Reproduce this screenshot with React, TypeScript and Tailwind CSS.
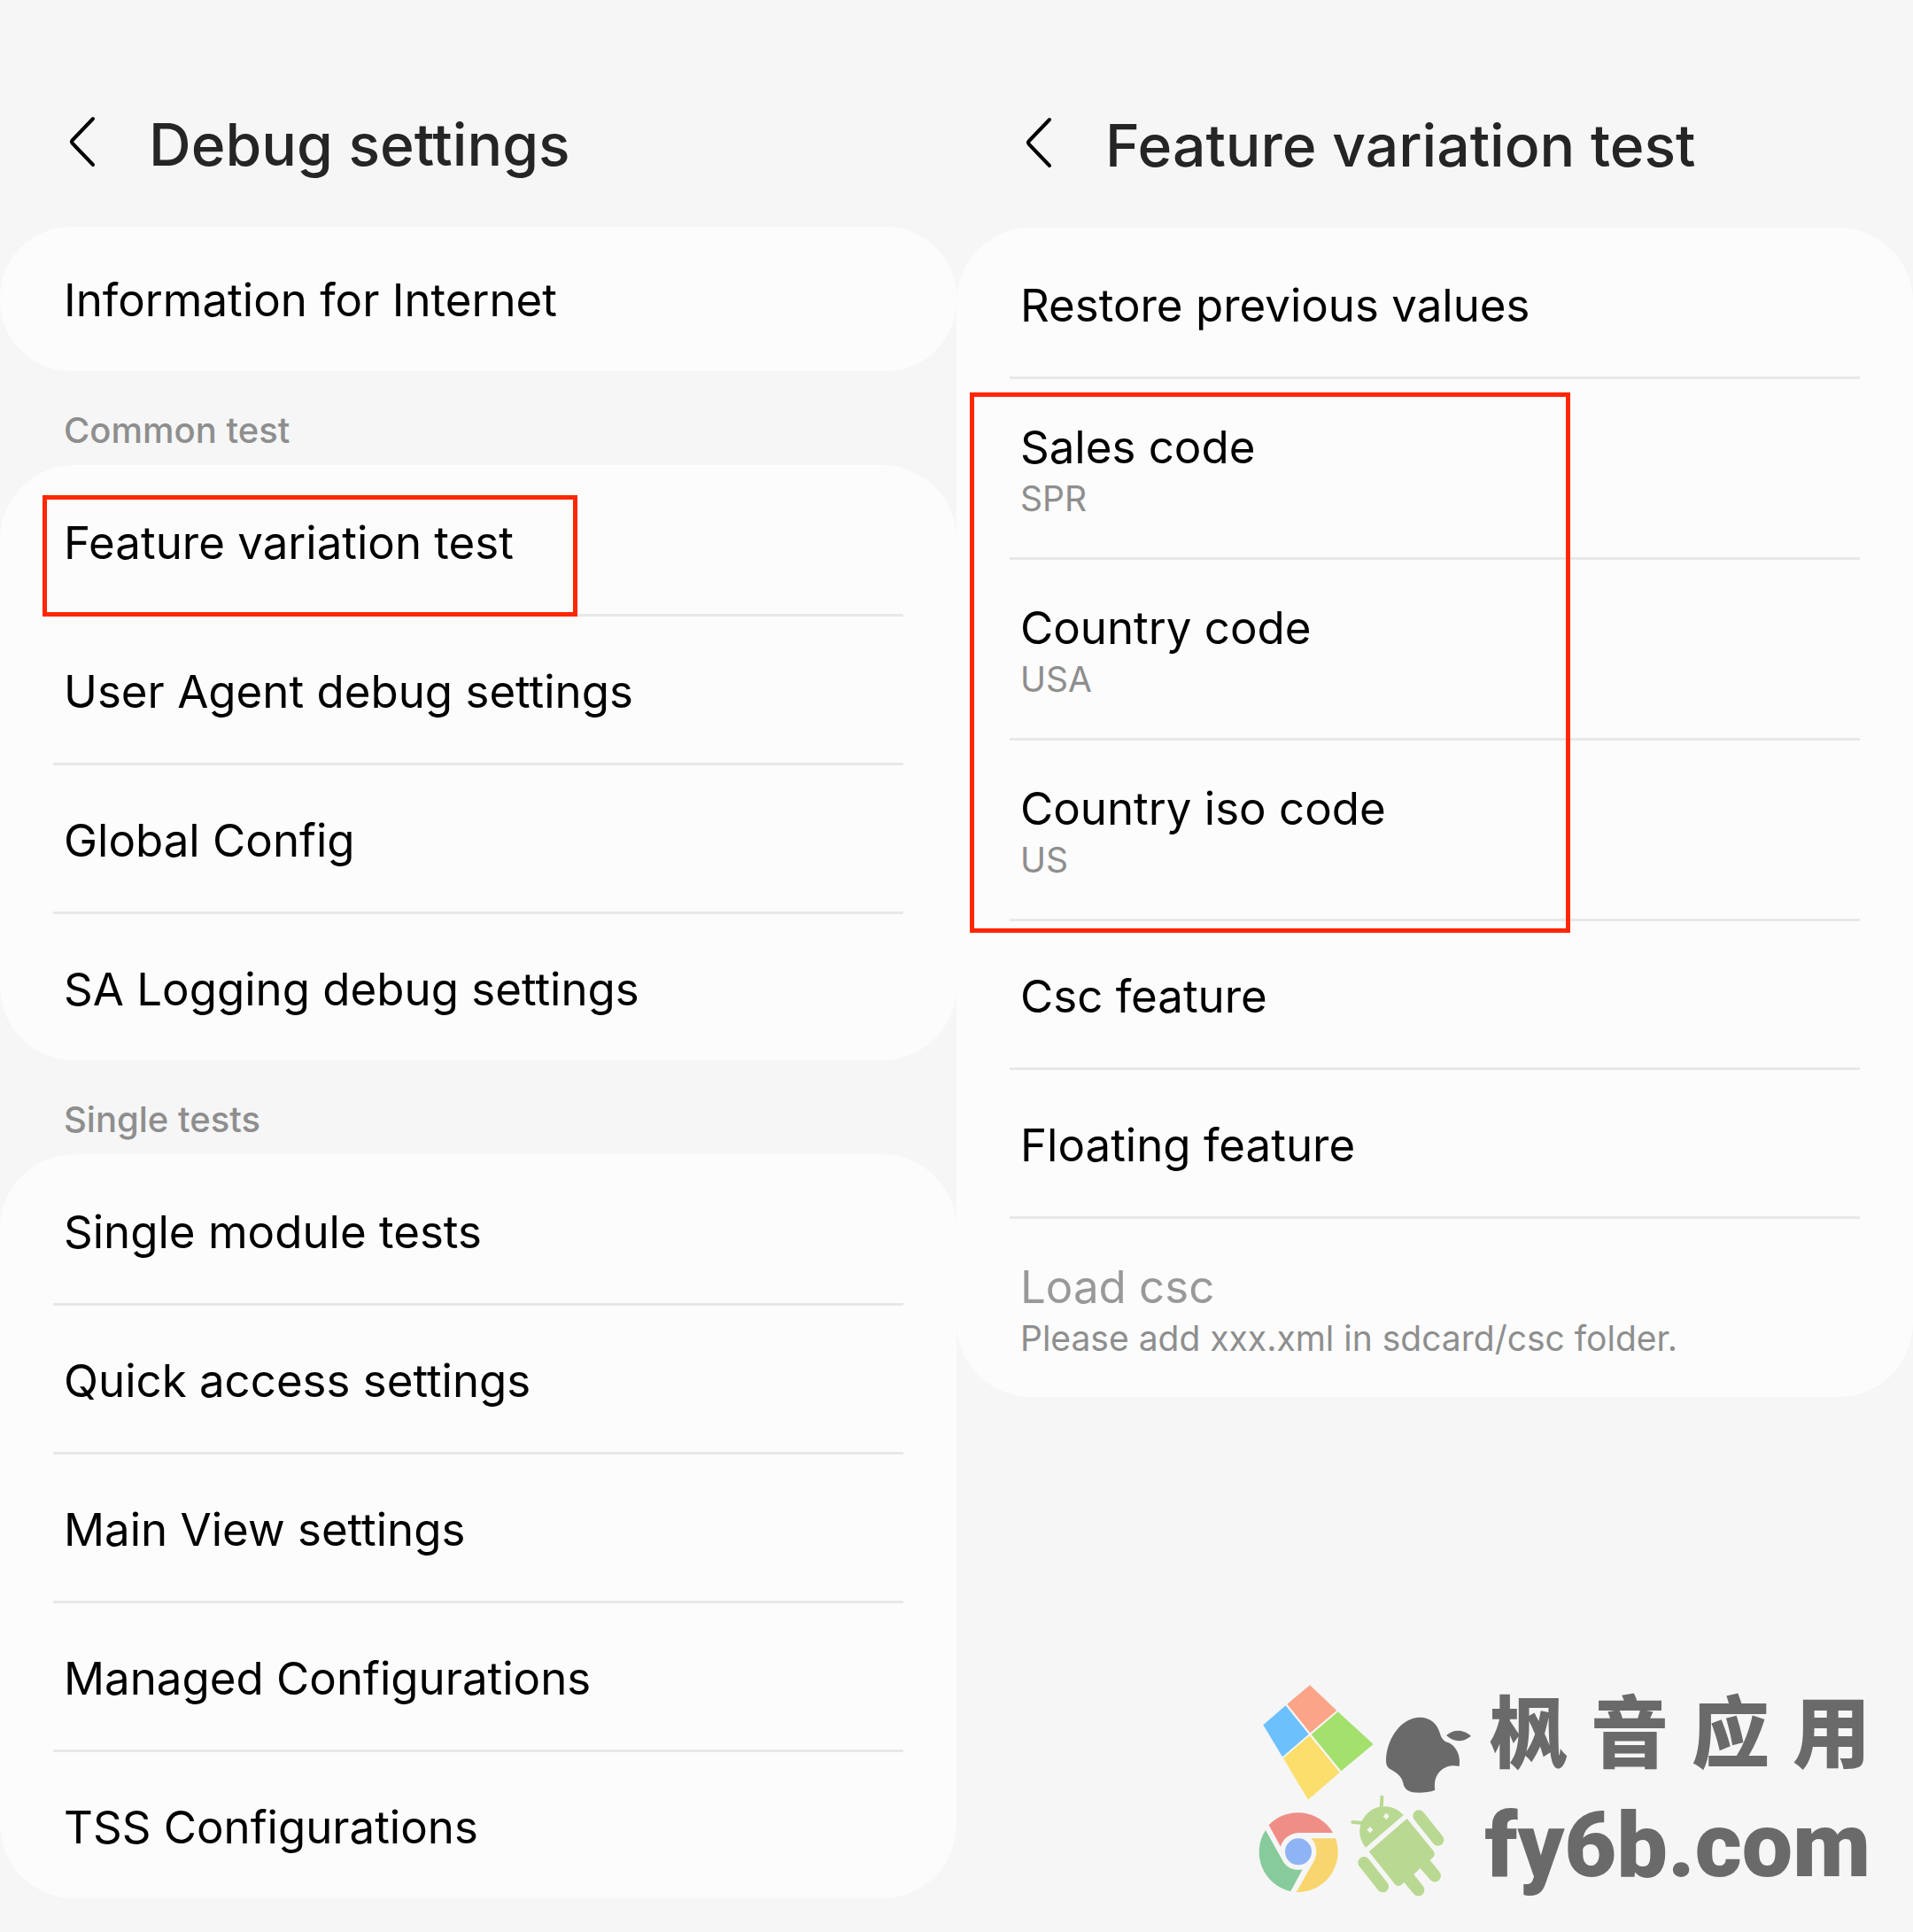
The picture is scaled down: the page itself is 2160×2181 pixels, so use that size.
type Item = { label: string; value?: string; disabled?: boolean };

const commonTests: Item[] = [
  { label: "Feature variation test" },
  { label: "User Agent debug settings" },
  { label: "Global Config" },
  { label: "SA Logging debug settings" },
];

const singleTests: Item[] = [
  { label: "Single module tests" },
  { label: "Quick access settings" },
  { label: "Main View settings" },
  { label: "Managed Configurations" },
  { label: "TSS Configurations" },
];

const featureItems: Item[] = [
  { label: "Restore previous values" },
  { label: "Sales code", value: "SPR" },
  { label: "Country code", value: "USA" },
  { label: "Country iso code", value: "US" },
  { label: "Csc feature" },
  { label: "Floating feature" },
  { label: "Load csc", value: "Please add xxx.xml in sdcard/csc folder.", disabled: true },
];

function Header({ title }: { title: string }) {
  return (
    <header className="flex h-64 items-end pb-14 pl-[72px]">
      <button type="button" aria-label="Back" className="mb-2 h-16 w-10">
        <svg viewBox="0 0 40 64" className="h-16 w-10" fill="none" stroke="#000" strokeWidth="4" strokeLinecap="round" strokeLinejoin="round">
          <path d="M33 6 L10 30 Q8 32 10 34 L33 58" />
        </svg>
      </button>
      <h1 className="ml-14 text-[66px] leading-[74px] font-medium text-[#252525]">{title}</h1>
    </header>
  );
}

function Rows({ items }: { items: Item[] }) {
  return (
    <ul>
      {items.map((item, i) => (
        <li key={item.label} className="px-[60px]">
          <button
            type="button"
            disabled={item.disabled}
            className={
              "flex w-full flex-col items-start justify-center border-t-3 px-3 text-left " +
              (i === 0 ? "border-transparent " : "border-[#e8e8e8] ") +
              (item.value ? "h-[204px] pt-2" : "h-[168px] pt-1")
            }
          >
            <span className={"text-[51px] leading-[60px] " + (item.disabled ? "text-[#999999]" : "text-black")}>{item.label}</span>
            {item.value && <span className="text-[39px] leading-[56px] text-[#8e8e8e]">{item.value}</span>}
          </button>
        </li>
      ))}
    </ul>
  );
}

function SectionTitle({ children }: { children: string }) {
  return <h2 className="flex h-[106px] items-end px-[72px] pb-3 text-[40px] leading-[54px] font-medium text-[#8e8e8e]">{children}</h2>;
}

function Logos() {
  return (
    <svg viewBox="66 66 720 720" className="size-60 shrink-0" aria-hidden="true">
      <path fill="#fca488" d="M240 67 331 153 241 229 163 131Z" />
      <path fill="#a4e06c" d="M335 157 455 267 346 358 245 234Z" />
      <path fill="#6cc0fc" d="M158 136 236 233 147 310 82 202Z" />
      <path fill="#fbde6c" d="M239 238 341 362 234 455 150 314Z" />
      <g fill="#6a6a6a">
        <path d="M612 176C650 176 672 200 680 228C686 250 694 257 710 262C735 274 752 305 746 342C700 330 655 362 664 422C640 432 610 432 588 430C566 424 558 412 556 398C550 372 528 360 510 350C500 342 498 335 498 318C502 240 555 176 612 176Z" />
        <path d="M702 237Q743 205 786 239Q743 273 702 237Z" />
      </g>
      <path fill="#ef8e87" d="M101 541A136 136 0 0 1 318 567H201C170 569 147 590 141 614Z" />
      <path fill="#88cb9b" d="M90 558 147 660C160 685 185 697 215 691L175 765A136 136 0 0 1 90 558Z" />
      <path fill="#f9d56f" d="M245 586H327A136 136 0 0 1 194 768L252 666C268 640 264 606 245 586Z" />
      <circle cx="201" cy="631" r="45" fill="#8fb4f5" />
      <g fill="#b9d993">
        <path d="M429 617A84 84 0 0 1 557 507Z" />
        <path d="M569 519 660 630Q665 638 659 648L647 660 678 698A20 20 0 0 1 648 727L614 687 592 708 623 747A20 20 0 0 1 592 774L559 735 550 743Q540 750 530 743L440 631Z" />
        <g stroke="#b9d993" strokeLinecap="round">
          <path strokeWidth="12" d="M484 446 482 484M385 531 420 534" />
          <path strokeWidth="40" d="M609 510 674 591M423 668 487 749" />
        </g>
      </g>
      <path fill="#f6f6f6" d="M499 500 509 511 499 522 488 511ZM444 547 454 557 444 568 433 557Z" />
    </svg>
  );
}

export default function App() {
  return (
    <main className="grid min-h-screen grid-cols-2 bg-[#f6f6f6] font-['Inter',sans-serif]">
      <section>
        <Header title="Debug settings" />
        <div className="flex h-[163px] rounded-[80px] bg-[#fcfcfc]">
          <button type="button" className="w-full px-[72px] pt-0.5 text-left text-[51px] leading-[60px] text-black">
            Information for Internet
          </button>
        </div>
        <SectionTitle>Common test</SectionTitle>
        <div className="relative rounded-[84px] bg-[#fcfcfc]">
          <Rows items={commonTests} />
          <div className="pointer-events-none absolute top-[34px] left-12 h-[137px] w-[604px] border-5 border-[#ff2600]" />
        </div>
        <SectionTitle>Single tests</SectionTitle>
        <div className="rounded-[84px] bg-[#fcfcfc]">
          <Rows items={singleTests} />
        </div>
      </section>

      <section className="flex flex-col pt-px">
        <Header title="Feature variation test" />
        <div className="relative rounded-[84px] bg-[#fcfcfc]">
          <Rows items={featureItems} />
          <div className="pointer-events-none absolute top-[186px] left-[15px] h-[610px] w-[678px] border-5 border-[#ff2600]" />
        </div>
        <div className="mt-auto mr-12 mb-[39px] flex gap-4 self-end text-[#6a6a6a]">
          <Logos />
          <div className="flex flex-col">
            <p className="flex justify-end gap-[26px] font-['Noto_Sans_CJK_SC',sans-serif] text-[88px] leading-[96px] font-black">
              <span>枫</span>
              <span>音</span>
              <span>应</span>
              <span>用</span>
            </p>
            <p className="mt-7 font-['Roboto',sans-serif] text-[102px] leading-[114px] font-black">fy6b.com</p>
          </div>
        </div>
      </section>
    </main>
  );
}
